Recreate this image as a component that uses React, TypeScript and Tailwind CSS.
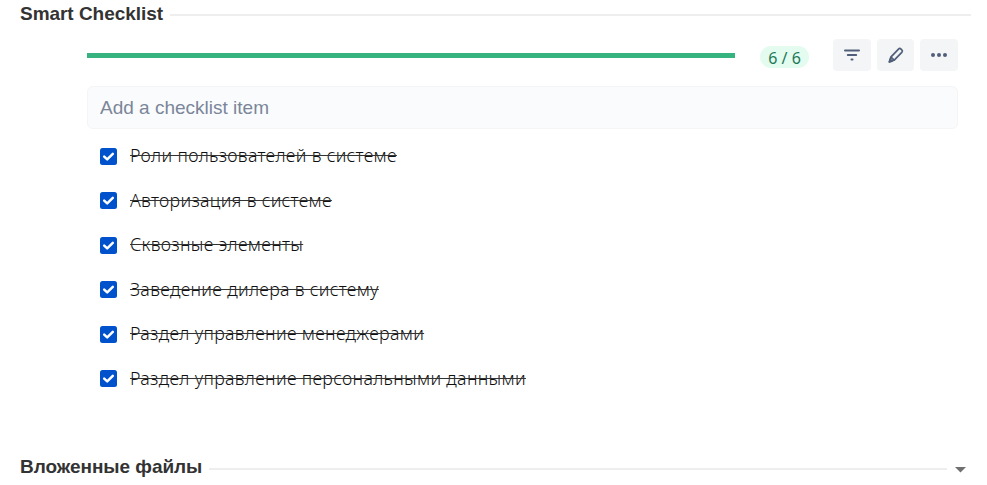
import type { ReactNode } from "react";

const items = [
  "Роли пользователей в системе",
  "Авторизация в системе",
  "Сквозные элементы",
  "Заведение дилера в систему",
  "Раздел управление менеджерами",
  "Раздел управление персональными данными",
];

function SectionTitle({ children }: { children: ReactNode }) {
  return (
    <h2 className="shrink-0 whitespace-nowrap text-[19px] leading-6 font-bold tracking-[-0.04px] text-[#333333]">{children}</h2>
  );
}

function ToolButton({ label, className, children }: { label: string; className: string; children: ReactNode }) {
  return (
    <button
      aria-label={label}
      className={`flex h-8 shrink-0 items-center justify-center rounded bg-[#f4f5f7] text-[#505f79] ${className}`}
    >
      {children}
    </button>
  );
}

function CheckedBox() {
  return (
    <svg width="17" height="17" viewBox="0 0 17 17" className="shrink-0">
      <rect width="17" height="17" rx="2.5" fill="#0052cc" />
      <path d="M4.2 8.6 7.2 11.4 12.8 5.8" fill="none" stroke="white" strokeWidth="2.5" strokeLinecap="round" strokeLinejoin="round" />
    </svg>
  );
}

export default function App() {
  return (
    <div className="h-[485px] w-[987px] overflow-hidden bg-white font-['Liberation_Sans',Arial,sans-serif]">
      <div className="flex h-[26px] items-center gap-[7px] pt-0.5 pr-4 pl-5">
        <SectionTitle>Smart Checklist</SectionTitle>
        <div className="mt-0.5 h-0.5 flex-1 bg-[#eeeeee]" />
      </div>

      <div className="mt-[13px] ml-[87px] flex h-8 w-[871px]">
        <div className="mt-3.5 h-[5px] w-[648px] bg-[#36b37e]" />
        <div className="mt-[7px] ml-[25px] flex h-[22px] w-[49px] items-center justify-center rounded-full bg-[#e3fcef] pt-px font-['Noto_Sans',sans-serif] text-[16px] text-[#1f7858]">
          6 / 6
        </div>
        <ToolButton label="Filter" className="ml-6 w-[38px]">
          <svg width="18" height="16" viewBox="0 0 18 16" fill="none" stroke="currentColor" strokeWidth="2" strokeLinecap="round">
            <path d="M2 3.4h14M4.8 8h8.4M8.5 12.5h1" />
          </svg>
        </ToolButton>
        <ToolButton label="Edit" className="ml-1.5 w-[37px]">
          <svg width="18" height="18" viewBox="0 0 18 18" fill="none" stroke="currentColor" strokeWidth="1.7" strokeLinejoin="round">
            <path d="M3.8 11.2 11.5 3.1Q12.7 1.8 14 3.1L14.8 3.9Q16 5.1 14.8 6.4L7 14.3 2.5 15.8Z" />
            <path d="M4 11.2 7 14.2" />
            <path d="m2.3 16 .9-2.8 1.9 1.9Z" fill="currentColor" />
          </svg>
        </ToolButton>
        <ToolButton label="More" className="ml-1.5 w-[38px]">
          <svg width="18" height="6" viewBox="0 0 18 6" fill="currentColor" className="mr-px">
            <circle cx="3" cy="3" r="2" />
            <circle cx="9" cy="3" r="2" />
            <circle cx="15" cy="3" r="2" />
          </svg>
        </ToolButton>
      </div>

      <input
        placeholder="Add a checklist item"
        className="mt-[15px] ml-[87px] block h-[43px] w-[871px] rounded-md border border-[#f4f5f7] bg-[#fafbfc] px-3 text-[19px] placeholder:text-[#7a869a]"
      />

      <ul className="mt-[5px] ml-[100px] font-['Noto_Sans',sans-serif] text-[17.8px] font-light tracking-[0.31px] text-[#111111]">
        {items.map((item) => (
          <li key={item} className="flex h-[44.5px] items-center gap-[13px]">
            <CheckedBox />
            <span className="pb-px line-through decoration-[#333333] decoration-1">{item}</span>
          </li>
        ))}
      </ul>

      <div className="mt-[54px] flex h-6 items-center pr-[21px] pl-5">
        <SectionTitle>Вложенные файлы</SectionTitle>
        <div className="mt-1 ml-[7px] h-0.5 flex-1 bg-[#eeeeee]" />
        <svg width="11" height="6" viewBox="0 0 11 6" className="mt-1.5 ml-2 shrink-0">
          <path d="M0 0h11L5.5 5.5Z" fill="#707070" />
        </svg>
      </div>
    </div>
  );
}
